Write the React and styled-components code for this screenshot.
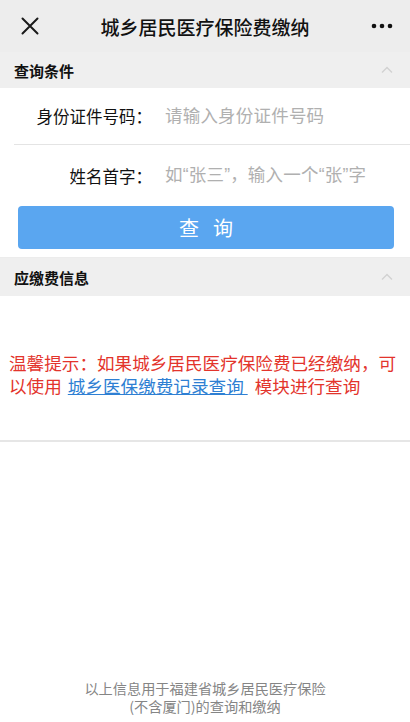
import React from 'react';
import styled, { createGlobalStyle } from 'styled-components';

const GlobalStyle = createGlobalStyle`
    html, body {
        margin: 0;
        padding: 0;
        background: #ffffff;
    }
    body {
        font-family: "Noto Sans CJK SC", "Noto Sans", sans-serif;
        color: #111;
    }
`;

const Page = styled.div`
    width: 410px;
    min-height: 722px;
    display: flex;
    flex-direction: column;
    background: #fff;
`;

const NavBar = styled.header`
    height: 52px;
    background: #ededed;
    display: flex;
    align-items: center;
    justify-content: space-between;
    padding: 0 16px 0 20px;
`;

const NavIcon = styled.div`
    width: ${ p => p.w || 20 }px;
    height: 20px;
    display: flex;
    align-items: center;
    justify-content: center;
`;

const NavTitle = styled.h1`
    margin: 0;
    font-size: 19px;
    font-weight: 500;
    color: #111;
`;

const SectionHeader = styled.div`
    height: ${ p => p.h || 36 }px;
    background: #efefef;
    display: flex;
    align-items: center;
    justify-content: space-between;
    padding: 0 17px 0 14px;
    font-size: 15px;
    font-weight: 700;
    color: #111;
`;

const Form = styled.div`
    padding: 0 0 8px 0;
    border-bottom: 1px solid #ececec;
`;

const Row = styled.div`
    display: flex;
    align-items: center;
    height: ${ p => p.h }px;
    margin-left: 14px;
    border-bottom: ${ p => p.line ? '1px solid #e4e4e4' : 'none' };
`;

const Label = styled.label`
    width: 138px;
    text-align: right;
    font-size: 16.5px;
    color: #111;
    flex-shrink: 0;
`;

// latin font first so the curly quotes stay narrow like the reference
const Input = styled.input`
    border: none;
    outline: none;
    background: transparent;
    margin-left: 13px;
    flex: 1;
    font-family: "Liberation Sans", "Noto Sans CJK SC", sans-serif;
    font-size: 17.5px;
    color: #111;
    padding: 0;

    &::placeholder {
        color: #b0b0b0;
        letter-spacing: 0.2px;
    }
`;

const QueryButton = styled.button`
    display: block;
    margin: 0 16px 0 18px;
    width: calc(100% - 34px);
    height: 43px;
    border: none;
    border-radius: 4px;
    background: #5aa6f0;
    color: #fff;
    font-family: inherit;
    font-size: 20px;
    letter-spacing: 14px;
    text-indent: 14px;
`;

const InfoBody = styled.div`
    height: 144px;
    display: flex;
    align-items: center;
    padding: 0 9px;
    border-bottom: 2px solid #e6e6e6;
`;

const Notice = styled.p`
    margin: 12px 0 0 0;
    font-size: 17.6px;
    line-height: 23px;
    color: #e3342c;
`;

const NoticeLink = styled.a`
    color: #2e7fd3;
    text-decoration: underline;
    margin: 0 7px 0 6px;
`;

const Footer = styled.footer`
    margin-top: auto;
    padding: 0 0 7px 0;
    text-align: center;
    font-size: 14.2px;
    line-height: 18px;
    color: #858585;
`;

const CloseIcon = () => (
    <svg width="18" height="18" viewBox="0 0 18 18">
        <path d="M1.5 1.5 L16.5 16.5 M16.5 1.5 L1.5 16.5" stroke="#1a1a1a" strokeWidth="2" strokeLinecap="round" fill="none" />
    </svg>
);

const MoreIcon = () => (
    <svg width="22" height="6" viewBox="0 0 22 6">
        <circle cx="3" cy="3" r="2.3" fill="#111" />
        <circle cx="11" cy="3" r="2.3" fill="#111" />
        <circle cx="19" cy="3" r="2.3" fill="#111" />
    </svg>
);

const ChevronUp = () => (
    <svg width="12" height="8" viewBox="0 0 12 8">
        <path d="M1 6.5 L6 1.5 L11 6.5" stroke="#d2d2d2" strokeWidth="1.5" fill="none" />
    </svg>
);

export default function App() {
    return (
        <Page>
            <GlobalStyle />
            <NavBar>
                <NavIcon><CloseIcon /></NavIcon>
                <NavTitle>城乡居民医疗保险费缴纳</NavTitle>
                <NavIcon w={24}><MoreIcon /></NavIcon>
            </NavBar>

            <SectionHeader>
                查询条件
                <ChevronUp />
            </SectionHeader>

            <Form>
                <Row h={56} line>
                    <Label>身份证件号码：</Label>
                    <Input placeholder="请输入身份证件号码" />
                </Row>
                <Row h={61}>
                    <Label>姓名首字：</Label>
                    <Input placeholder="如“张三”，输入一个“张”字" />
                </Row>
                <QueryButton>查询</QueryButton>
            </Form>

            <SectionHeader h={38}>
                应缴费信息
                <ChevronUp />
            </SectionHeader>

            <InfoBody>
                <Notice>
                    温馨提示：如果城乡居民医疗保险费已经缴纳，可以使用
                    <NoticeLink href="#">城乡医保缴费记录查询 </NoticeLink>
                    模块进行查询
                </Notice>
            </InfoBody>

            <Footer>
                以上信息用于福建省城乡居民医疗保险<br />
                (不含厦门)的查询和缴纳
            </Footer>
        </Page>
    );
}
